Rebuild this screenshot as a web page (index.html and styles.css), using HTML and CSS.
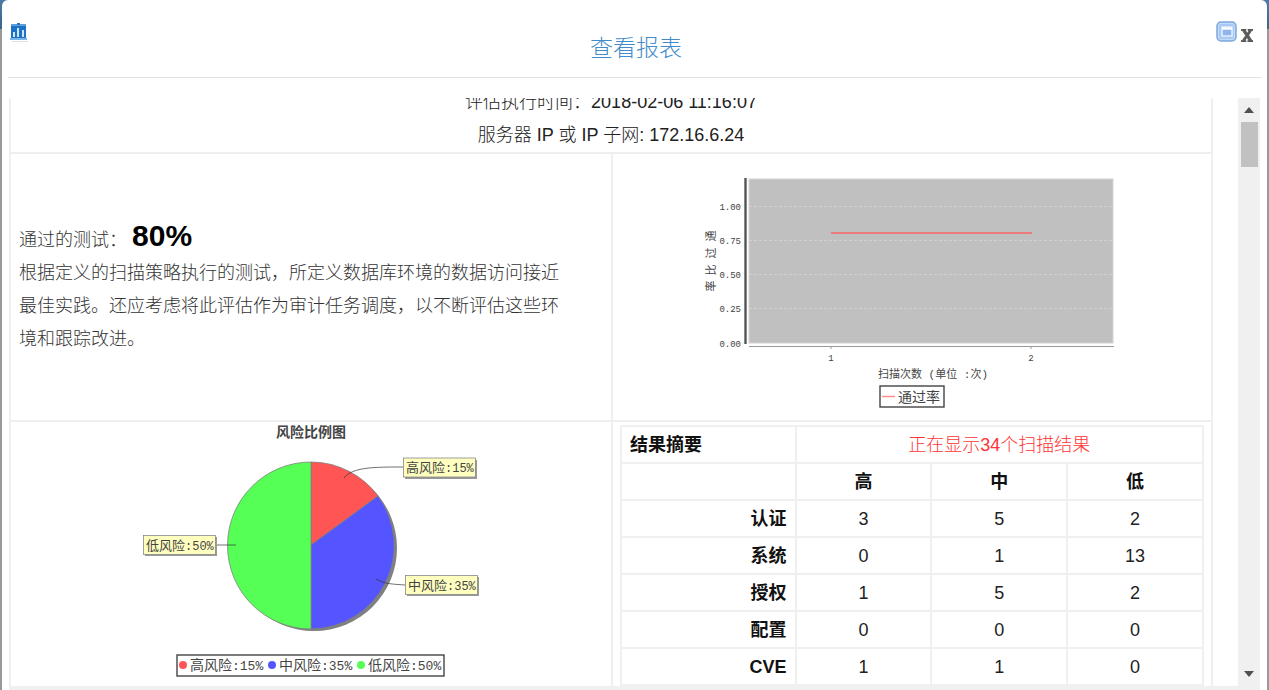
FILE: index.html
```html
<!DOCTYPE html>
<html lang="zh-CN">
<head>
<meta charset="utf-8">
<title>查看报表</title>
<link rel="stylesheet" href="styles.css">
</head>
<body>
<main class="dialog">
  <header class="dialog-header">
    <svg class="report-icon" viewBox="0 0 18 20" width="18" height="20" aria-hidden="true">
      <path d="M1 1h15v2H1z" fill="#5b9fdc"/><path d="M7 0h3v2H7z" fill="#2a78c4"/>
      <path d="M1 3h15v12H1z" fill="#1c72c4"/>
      <path d="M3 9h2v5H3zM7 5h2v9H7zM12 7h2v7h-2z" fill="#cfe6fa"/>
      <path d="M0 15h17v2H0z" fill="#79b5e8"/><path d="M2 18h16v1H2z" fill="#e2e2e2"/>
    </svg>
    <h1 class="title">查看报表</h1>
    <div class="window-actions">
      <button class="maximize" aria-label="最大化">
        <svg viewBox="0 0 21 21" width="21" height="21" aria-hidden="true">
          <rect x="1" y="1" width="19" height="19" rx="4" fill="#a9c9f3" stroke="#7fa9de" stroke-width="1.5"/>
          <rect x="2.5" y="2.5" width="16" height="16" rx="2.5" fill="none" stroke="#c3daf8"/>
          <rect x="6" y="6" width="10" height="9" fill="#8fb6ec" stroke="#e9f2fd" stroke-width="1.4"/>
          <path d="M6 7.5h10" stroke="#fff" stroke-width="2.4"/>
        </svg>
      </button>
      <button class="close" aria-label="关闭">
        <svg viewBox="0 0 12 13" width="12" height="13" aria-hidden="true">
          <path d="M0 0h5v1.500H4.500L6.200 4.300 8 1.500H7V0h5v1.500h-1.200L7.700 6.200 11 11.500h1V13H6.800v-1.500h1L6 8.500l-2 3h1V13H0v-1.500h1.300L4.600 6.500 1.300 1.500H0z" fill="#5a5a5a" stroke="#5a5a5a" stroke-width=".7"/>
        </svg>
      </button>
    </div>
  </header>

  <div class="viewport">
    <article class="report">
      <section class="meta">
        <p>评估执行时间：2018-02-06 11:16:07</p>
        <p>服务器 IP 或 IP 子网: 172.16.6.24</p>
      </section>

      <section class="cell summary">
        <div class="summary-text">
          <p>通过的测试： <strong class="score">80%</strong></p>
          <p>根据定义的扫描策略执行的测试，所定义数据库环境的数据访问接近最佳实践。还应考虑将此评估作为审计任务调度，以不断评估这些环境和跟踪改进。</p>
        </div>
      </section>

      <section class="cell chart">
        <svg class="plot" viewBox="692 154 440 266" width="440" height="266" role="img" aria-label="通过比率">
          <rect x="749" y="179" width="364" height="164" fill="#c0c0c0" stroke="#d4d4d4"/>
          <g stroke="#d0d0d0" stroke-dasharray="3 2">
            <path d="M749 206.500h364M749 240.500h364M749 274.500h364M749 308.500h364"/>
          </g>
          <path d="M745.500 178v166" stroke="#555" stroke-width="2.400"/>
          <path d="M749 346.500h365M831 346v3M1031 346v3" stroke="#999" fill="none"/>
          <path d="M831 233h201" stroke="#ec7c7c" stroke-width="2"/>
          <g class="tick" text-anchor="end">
            <text x="741" y="210">1.00</text><text x="741" y="244">0.75</text><text x="741" y="278">0.50</text><text x="741" y="312">0.25</text><text x="741" y="347">0.00</text>
          </g>
          <g class="tick" text-anchor="middle"><text x="831" y="361">1</text><text x="1031" y="361">2</text></g>
          <g class="axis-name" text-anchor="middle">
            <text transform="translate(715 236) rotate(-90)">通</text>
            <text transform="translate(715 253) rotate(-90)">过</text>
            <text transform="translate(715 270) rotate(-90)">比</text>
            <text transform="translate(715 286) rotate(-90)">率</text>
          </g>
          <text class="axis-name" x="878" y="378">扫描次数 (单位 :次)</text>
          <rect x="880" y="386" width="64" height="21" fill="#fff" stroke="#444" stroke-width="1.400"/>
          <path d="M882 396.500h13" stroke="#f88" stroke-width="1.400"/>
          <text class="label" x="898" y="402">通过率</text>
        </svg>
      </section>

      <section class="cell chart">
        <svg class="plot" viewBox="111 422 400 262" width="400" height="262" role="img" aria-label="风险比例图">
          <text class="chart-title" x="311" y="437" text-anchor="middle">风险比例图</text>
          <circle cx="314" cy="548" r="83" fill="#808080"/>
          <g stroke="#808080" stroke-width=".8">
            <path d="M311 545V462A83.500 83.500 0 0 1 378 496z" fill="#f55"/>
            <path d="M311 545L378 496A83.500 83.500 0 0 1 311 629z" fill="#55f"/>
            <path d="M311 462V629A83.500 83.500 0 0 1 311 462z" fill="#5f5"/>
          </g>
          <path d="M344 478C352 467 375 467 403 467M376 579C385 584 391 584 405 585M215 545h21" fill="none" stroke="#333" stroke-width=".7"/>
          <g fill="#999"><rect x="405" y="460" width="72" height="19"/><rect x="407" y="577" width="72" height="19"/><rect x="145" y="537" width="72" height="19"/></g>
          <g fill="#ffffc0" stroke="#888" stroke-width=".8">
            <rect x="403.500" y="458" width="72" height="19"/><rect x="405.500" y="575.500" width="72" height="19"/><rect x="143.500" y="535.500" width="72" height="19"/>
          </g>
          <g class="small-label">
            <text x="406" y="472">高风险<tspan class="mono">:15%</tspan></text>
            <text x="408" y="590">中风险<tspan class="mono">:35%</tspan></text>
            <text x="146" y="550">低风险<tspan class="mono">:50%</tspan></text>
          </g>
          <rect x="177" y="655" width="267" height="21" fill="#fff" stroke="#444" stroke-width="1.400"/>
          <circle cx="183" cy="665" r="4" fill="#f55"/><circle cx="272" cy="665" r="4" fill="#55f"/><circle cx="361" cy="665" r="4" fill="#5f5"/>
          <g class="label">
            <text x="190" y="670">高风险<tspan class="mono-large">:15%</tspan></text>
            <text x="279" y="670">中风险<tspan class="mono-large">:35%</tspan></text>
            <text x="368" y="670">低风险<tspan class="mono-large">:50%</tspan></text>
          </g>
        </svg>
      </section>

      <section class="cell results">
        <table class="results-table">
          <thead>
            <tr><th class="row-name heading" scope="col">结果摘要</th><td colspan="3" class="notice">正在显示<b>34</b>个扫描结果</td></tr>
            <tr><td></td><th scope="col">高</th><th scope="col">中</th><th scope="col">低</th></tr>
          </thead>
          <tbody>
            <tr><th class="row-name" scope="row">认证</th><td>3</td><td>5</td><td>2</td></tr>
            <tr><th class="row-name" scope="row">系统</th><td>0</td><td>1</td><td>13</td></tr>
            <tr><th class="row-name" scope="row">授权</th><td>1</td><td>5</td><td>2</td></tr>
            <tr><th class="row-name" scope="row">配置</th><td>0</td><td>0</td><td>0</td></tr>
            <tr><th class="row-name" scope="row">CVE</th><td>1</td><td>1</td><td>0</td></tr>
          </tbody>
        </table>
      </section>
    </article>

    <div class="scrollbar">
      <button class="arrow" aria-label="向上滚动"><svg viewBox="0 0 10 6" width="10" height="6"><path d="M0 6L5 0l5 6z" fill="#505050"/></svg></button>
      <div class="thumb"></div>
      <button class="arrow arrow-down" aria-label="向下滚动"><svg viewBox="0 0 10 6" width="10" height="6"><path d="M0 0L5 6l5-6z" fill="#505050"/></svg></button>
    </div>
  </div>
  <div class="bottom-track"></div>
</main>
</body>
</html>
```
FILE: styles.css
```css
* { box-sizing: border-box; }

body {
  margin: 0;
  min-height: 100vh;
  padding: 0 2px;
  display: flex;
  background: linear-gradient(#4c7ba6 0, #3f6489 29px, #999 29px);
  font-family: "Liberation Sans", "Noto Sans CJK SC", sans-serif;
  font-size: 18px;
  font-weight: 300;
  color: #333;
}

h1, p { margin: 0; font-weight: 300; }

button {
  display: flex;
  padding: 0;
  border: 0;
  background: none;
  cursor: pointer;
}

.dialog {
  flex: 1;
  min-width: 0;
  display: flex;
  flex-direction: column;
  padding: 0 6px;
  background: #fff;
  border-radius: 6px 6px 0 0;
}

.dialog-header {
  height: 78px;
  display: grid;
  grid-template-columns: 1fr auto 1fr;
  align-items: start;
  padding: 21px 8px 0 2px;
  border-bottom: 1px solid #e2e2e2;
}

.report-icon { margin-top: 2px; }

.title {
  margin-top: 10px;
  padding-left: 9px;
  font-size: 23px;
  line-height: 34px;
  color: #428bca;
}

.window-actions {
  display: flex;
  gap: 4px;
  justify-content: flex-end;
}

.close { margin-top: 8px; }

.viewport {
  flex: 1;
  display: flex;
  justify-content: space-between;
  gap: 25px;
  padding: 20px 1px 0;
}

.report {
  flex: 1;
  min-width: 0;
  display: grid;
  grid-template-columns: 1fr 1fr;
  grid-template-rows: 54px 268px 1fr;
  border: solid #f0f0f0;
  border-width: 0 2px;
}

.meta {
  grid-column: 1 / -1;
  overflow: hidden;
  display: flex;
  flex-direction: column;
  justify-content: flex-end;
  text-align: center;
  line-height: 33px;
  color: #222;
}

.meta p { flex: none; }

.cell { border-top: 2px solid #eee; }

.cell:nth-child(odd) { border-left: 2px solid #f0f0f0; }

.summary {
  display: flex;
  align-items: center;
  padding: 0 8px;
}

.summary-text {
  max-width: 545px;
  line-height: 33px;
}

.score {
  font-size: 30px;
  font-weight: 700;
  color: #000;
}

.chart {
  display: flex;
  justify-content: center;
}

.plot { flex: none; }

.plot text {
  font-family: "Liberation Mono", "Noto Sans CJK SC", monospace;
  font-weight: 400;
  fill: #444;
}

.plot .tick text { font-size: 9px; }

.plot .axis-name, .plot .axis-name text { font-size: 11px; }

.plot .label, .plot .label text { font-size: 14px; }

.plot .small-label text { font-size: 13px; }

.plot .mono { font-size: 12px; }

.plot .mono-large { font-size: 13px; }

.plot .chart-title { font-size: 14px; font-weight: 700; }

.results { padding: 3px 7px 0; }

.results-table {
  width: 100%;
  table-layout: fixed;
  border-collapse: collapse;
  text-align: center;
  color: #222;
}

.results-table th, .results-table td {
  height: 37px;
  padding: 0 8px;
  border: 2px solid #f0f0f0;
  line-height: 20px;
}

.results-table th { font-weight: 700; color: #111; }

.results-table .row-name {
  width: 30%;
  text-align: right;
}

.results-table .heading { text-align: left; }

.results-table .notice { color: #f33; }

.scrollbar {
  width: 22px;
  flex: none;
  display: flex;
  flex-direction: column;
  align-items: center;
  background: #f0f0f0;
}

.arrow {
  width: 22px;
  height: 24px;
  align-items: center;
  justify-content: center;
}

.thumb {
  width: 17px;
  height: 45px;
  background: #c1c1c1;
}

.arrow-down { margin-top: auto; }

.bottom-track {
  height: 4px;
  margin: 0 1px;
  background: #f0f0f0;
}
```
